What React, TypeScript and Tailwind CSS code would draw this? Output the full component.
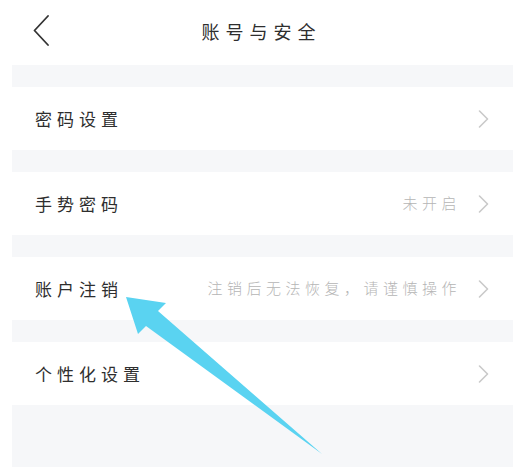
import React from 'react';

const FONT = { fontFamily: '"Noto Sans CJK SC", "Noto Sans", sans-serif' };

function Chevron() {
  return (
    <svg width="11" height="18" viewBox="0 0 11 18" fill="none" className="shrink-0">
      <polyline points="1.5,1 9.5,9 1.5,17" stroke="#c9c9c9" strokeWidth="1.6" strokeLinecap="round" strokeLinejoin="round" />
    </svg>
  );
}

function Gap({ h = 'h-[22px]' }: { h?: string }) {
  return <div className={`${h} bg-[#f6f7f9]`} />;
}

function Row({ label, hint }: { label: string; hint?: string }) {
  return (
    <div className="h-[63px] bg-white flex items-center pl-[23px] pr-[24px]">
      <span className="text-[17px] tracking-[5px] text-[#2e2e2e]">{label}</span>
      <div className="ml-auto flex items-center gap-[17px]">
        {hint && <span className="text-[15px] tracking-[4.5px] text-[#b5b5b5] font-light">{hint}</span>}
        <Chevron />
      </div>
    </div>
  );
}

export default function App() {
  return (
    <div className="relative w-[513px] h-[469px] bg-white overflow-hidden" style={FONT}>
      <header className="relative h-[65px] flex items-center justify-center">
        <svg width="16" height="31" viewBox="0 0 16 31" fill="none" className="absolute left-[33px] top-[15px]">
          <polyline points="15,1 1.5,15.5 15,30" stroke="#333" strokeWidth="1.8" strokeLinejoin="round" strokeLinecap="round" />
        </svg>
        <h1 className="text-[18px] tracking-[6px] text-[#2e2e2e] pl-[10px] -mt-[2px]">账号与安全</h1>
      </header>

      <div className="ml-[12px]">
        <Gap />
        <Row label="密码设置" />
        <Gap />
        <Row label="手势密码" hint="未开启" />
        <Gap />
        <Row label="账户注销" hint="注销后无法恢复，请谨慎操作" />
        <Gap />
        <Row label="个性化设置" />
        <Gap h="h-[62px]" />
      </div>

      {/* annotation arrow */}
      <svg width="513" height="469" viewBox="0 0 513 469" className="absolute inset-0 pointer-events-none">
        <polygon points="126,297 166,303 158,311 322,454 146,326 138,334" fill="#5ad3f1" />
      </svg>
    </div>
  );
}
